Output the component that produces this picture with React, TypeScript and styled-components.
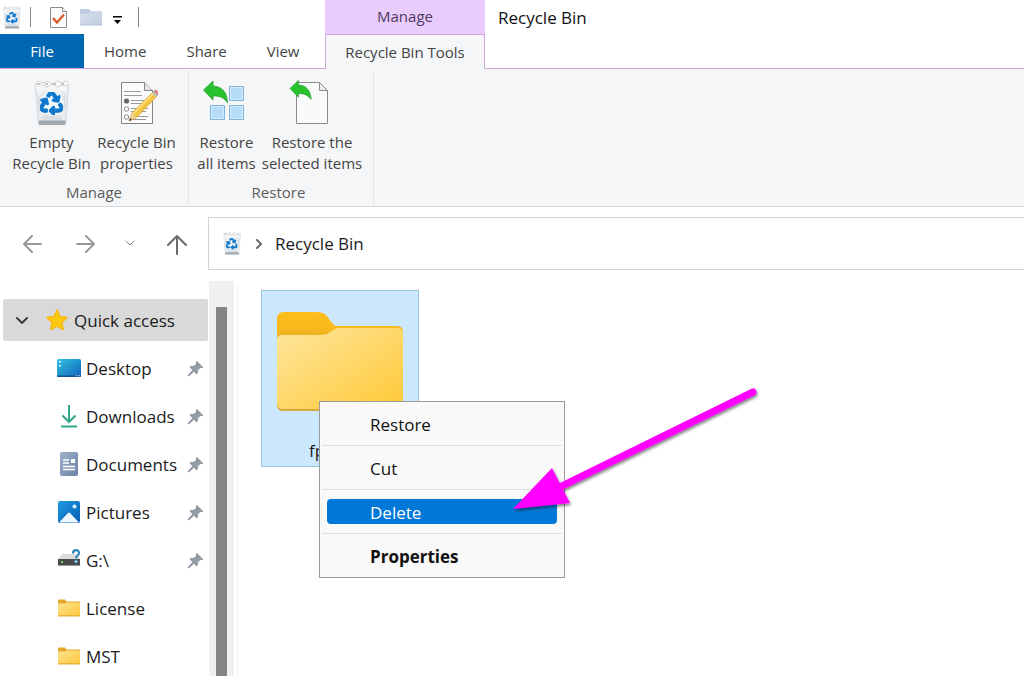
import React from "react";
import styled, { createGlobalStyle, css } from "styled-components";
import { FaRecycle } from "react-icons/fa";

const GlobalStyle = createGlobalStyle`
  *, *::before, *::after { box-sizing: border-box; }
  body {
    margin: 0;
    background: #ffffff;
    color: #1b1b1b;
    font-family: "Open Sans", "Noto Sans", sans-serif;
    font-size: 17px;
    line-height: 24px;
  }
  button {
    margin: 0;
    padding: 0;
    border: 0;
    background: none;
    color: inherit;
    font: inherit;
    cursor: pointer;
  }
  a { color: inherit; text-decoration: none; }
  svg { display: block; flex: none; }
`;

const Window = styled.div`
  display: flex;
  flex-direction: column;
  height: 100vh;
  overflow: hidden;
`;

/* Title bar and ribbon tabs */

const Header = styled.header`
  display: flex;
  flex: none;
  height: 69px;
  font-size: 15px;
`;

const HeaderStart = styled.div`
  display: flex;
  flex-direction: column;
  flex: none;
  width: 325px;
`;

const QuickToolbar = styled.div`
  display: flex;
  align-items: center;
  height: 34px;
  padding-left: 3px;
`;

const ToolButton = styled.button<{ $gap: number }>`
  margin-left: ${(p) => p.$gap}px;
`;

const ToolDivider = styled.span<{ $gap: number }>`
  width: 1px;
  height: 20px;
  margin-left: ${(p) => p.$gap}px;
  background: #8a8a8a;
`;

const TabList = styled.div`
  display: flex;
  flex: 1;
  border-bottom: 1px solid #cda6da;
`;

const Tab = styled.button<{ $primary?: boolean }>`
  padding: 0 20px;
  color: #444;
  ${(p) =>
    p.$primary &&
    css`
      width: 84px;
      background: #0067b3;
      color: #fff;
    `}
`;

const ContextTabs = styled.div`
  display: flex;
  flex-direction: column;
  flex: none;
  width: 160px;
  background: #e9cbfc;
  color: #4c3a5c;
  text-align: center;
`;

const ContextLabel = styled.span`
  height: 34px;
  line-height: 32px;
`;

const ContextTab = styled.button`
  flex: 1;
  border: 1px solid #cda6da;
  border-bottom: 0;
  background: #f5f6f7;
  color: #444;
`;

const WindowTitle = styled.h1`
  flex: 1;
  margin: 0;
  padding-left: 13px;
  border-bottom: 1px solid #cda6da;
  color: #111;
  font-size: 17px;
  font-weight: 400;
  line-height: 35px;
`;

/* Ribbon */

const Ribbon = styled.div`
  display: flex;
  flex: none;
  height: 138px;
  padding-top: 2px;
  border-bottom: 1px solid #d6d9dc;
  background: #f5f6f7;
  color: #444;
  font-size: 15px;
  line-height: 21px;
`;

const RibbonGroup = styled.section<{ $start: number; $end: number }>`
  display: flex;
  flex-direction: column;
  padding: 6px ${(p) => p.$end}px 0 ${(p) => p.$start}px;
  margin-bottom: 2px;
  border-right: 1px solid #e2e4e6;
`;

const RibbonButtons = styled.div`
  display: flex;
`;

const RibbonButton = styled.button<{ $width: number }>`
  display: flex;
  flex-direction: column;
  align-items: center;
  gap: 6px;
  width: ${(p) => p.$width}px;
  padding-top: 3px;
  white-space: pre;
`;

const GroupLabel = styled.span`
  margin-top: 8px;
  color: #5c5c5c;
  text-align: center;
`;

/* Navigation row */

const NavRow = styled.div`
  display: flex;
  flex: none;
  height: 74px;
  padding-top: 10px;
`;

const NavButtons = styled.div`
  display: grid;
  grid-template-columns: 54px 48px 43px 20px;
  align-items: center;
  width: 208px;
  height: 53px;
  padding-left: 22px;
`;

const AddressBar = styled.div`
  display: flex;
  flex: 1;
  align-items: center;
  gap: 12px;
  height: 53px;
  padding-left: 14px;
  border: 1px solid #d4d4d4;
  border-right: 0;
`;

/* Body */

const Body = styled.div`
  display: flex;
  flex: 1;
  min-height: 0;
`;

const Sidebar = styled.nav`
  flex: none;
  width: 209px;
  padding: 15px 1px 0 3px;
  overflow: hidden;
`;

const Label = styled.span`
  padding-top: 2px;
`;

const QuickAccess = styled.a`
  display: flex;
  align-items: center;
  height: 42px;
  margin: 3px 0;
  padding-left: 12px;
  border-radius: 2px;
  background: #d9d9d9;

  svg:nth-child(2) {
    margin: 0 5px 0 15px;
  }
`;

const Place = styled.a`
  display: grid;
  grid-template-columns: 26px 1fr 18px;
  align-items: center;
  column-gap: 4px;
  height: 48px;
  padding: 0 3px 0 53px;
  white-space: nowrap;

  svg:first-child {
    justify-self: center;
  }
`;

const ScrollTrack = styled.div`
  flex: none;
  width: 25px;
  padding: 26px 7px 0;
  background: #f0f0f0;
`;

const ScrollThumb = styled.div`
  width: 11px;
  height: 100%;
  background: #858585;
`;

const Content = styled.main`
  flex: 1;
  margin-left: 3px;
  padding: 9px 23px;
  border-left: 1px solid #f3f3f3;
`;

const FileTile = styled.div`
  position: relative;
  display: flex;
  flex-direction: column;
  align-items: center;
  width: 158px;
  height: 177px;
  padding-top: 20px;
  border: 1px solid #94c4e4;
  background: #cce8ff;
`;

const FileName = styled.span`
  width: 62px;
  margin-top: 28px;
`;

const Menu = styled.div`
  position: absolute;
  top: 110px;
  left: 57px;
  display: flex;
  flex-direction: column;
  width: 246px;
  padding: 0 2px;
  border: 1px solid #9a9a9a;
  background: #f9f9f9;
  color: #111;
`;

const MenuItem = styled.button<{ $selected?: boolean; $strong?: boolean }>`
  height: 25px;
  margin: 9px 5px;
  padding: 2px 0 0 43px;
  border-radius: 4px;
  text-align: left;
  font-weight: ${(p) => (p.$strong ? 700 : 400)};
  ${(p) =>
    p.$selected &&
    css`
      background: #0078d7;
      color: #fff;
    `}
`;

const MenuDivider = styled.hr`
  width: 100%;
  height: 1px;
  margin: 0;
  border: 0;
  background: #dedede;
`;

const Pointer = styled.svg`
  position: absolute;
  top: -18px;
  left: 186px;
  pointer-events: none;
`;

/* Icons */

function BinIcon({ width, height }: { width: number; height: number }) {
  return (
    <svg width={width} height={height} viewBox="0 0 36 46" preserveAspectRatio="none" aria-hidden="true">
      <path d="M1 4h34l-3 41H4z" fill="#e9edf0" />
      <path d="M1 4h34l-1 9-6-3-8 4-8-4-6 4-4-2z" fill="#f3f5f6" />
      <path d="M4 16l6 6-4 10-2-2zM32 13l-5 7 3 10 1-1zM8 36l10-3 10 3v5H8z" fill="#dbe0e5" />
      <path d="M1 4l3-3 5 2 5-2 4 3 5-3 5 2 4-2 3 3v2l-6-1-5 2-6-3-5 3-6-3z" fill="#fafafa" stroke="#cfd2d4" strokeWidth="1" />
      <path d="M3 4h31" stroke="#b5b9bc" strokeWidth="1.300" strokeDasharray="3 5" />
      <path d="M4 40.500h28.300l-.3 4.500H4.300z" fill="#9fa8af" />
      <path d="M1.500 5l3 40M34.500 5l-3 40" stroke="#d3d8dc" />
      <circle cx="18" cy="24" r="12" fill="#f4f9fd" opacity=".8" />
      <FaRecycle x={6} y={12} size={23} color="#1078cc" stroke="#1078cc" strokeWidth={30} />
    </svg>
  );
}

function CheckPageIcon() {
  return (
    <svg width="19" height="23" viewBox="0 0 19 23" aria-hidden="true">
      <path d="M1.500 1.500h12l4 4v16h-16z" fill="#fbfbfb" stroke="#8c8c8c" />
      <path d="M13.500 1.500v4h4" fill="#fff" stroke="#8c8c8c" />
      <path d="M4 12l4 4.500 7-8" fill="none" stroke="#dd5a2c" strokeWidth="2.300" />
    </svg>
  );
}

function NewFolderIcon() {
  return (
    <svg width="23" height="18" viewBox="0 0 23 18" aria-hidden="true">
      <defs>
        <linearGradient id="pale" x1="0" y1="0" x2="1" y2="1">
          <stop offset="0" stopColor="#d6dfed" />
          <stop offset="1" stopColor="#c3cee2" />
        </linearGradient>
      </defs>
      <path d="M0 1h9l2 2h11v14H0z" fill="#c0cce0" />
      <path d="M0 6h8l3-3h11v13H0z" fill="url(#pale)" />
      <path d="M0 17h22" stroke="#b4c1d6" />
    </svg>
  );
}

function CustomizeIcon() {
  return (
    <svg width="9" height="15" viewBox="0 0 9 15" aria-hidden="true">
      <path d="M0 6h9v1.500H0zM1 10h7l-3.500 4z" fill="#000" />
    </svg>
  );
}

function PropertiesIcon() {
  return (
    <svg width="42" height="46" viewBox="0 0 42 46" aria-hidden="true">
      <path d="M5.500 2.500h23l8 8v33h-31z" fill="#fbfbfb" stroke="#858585" />
      <path d="M28.500 2.500v8h8" fill="#e8e8e8" stroke="#858585" />
      <path d="M8 11.500h17M8 15.500h18M15 20.500h17M15 23.500h15M15 28.500h17M15 31.500h15M15 36.500h17M15 39.500h15" stroke="#9a9a9a" />
      <circle cx="10.500" cy="21" r="2.600" fill="#666" />
      <circle cx="10.500" cy="29" r="2.200" fill="#fff" stroke="#888" />
      <circle cx="10.500" cy="37" r="2.200" fill="#fff" stroke="#888" />
      <path d="M13 41l3-8L38 11l4 4-22 23z" fill="#f4c542" stroke="#d79f25" strokeWidth=".7" />
      <path d="M17 34L38 13" stroke="#ffe48a" strokeWidth="1.500" />
      <path d="M13 41l3-8 4 4.500z" fill="#ecd0a0" />
      <path d="M13 41l1-3 2 2z" fill="#333" />
      <path d="M36 13l2-2 4 4-2 2z" fill="#b8bdc2" />
      <path d="M38 11l1.500-1.500q2 0 2.500 3v2.500z" fill="#e2798a" />
    </svg>
  );
}

function RestoreArrow() {
  return (
    <path
      d="M0 9L9.500 0v5c8 .5 14 5 14.500 16.500-4-5-8-7-14.500-6.500v4z"
      fill="#27c22c"
      stroke="#2a9a35"
      strokeWidth=".8"
      strokeLinejoin="round"
    />
  );
}

function RestoreAllIcon() {
  return (
    <svg width="48" height="46" viewBox="0 0 48 46" aria-hidden="true">
      <g fill="#b5dcf9" stroke="#7fb2dc">
        <path d="M26.500 6.500h14v14h-14zM7.500 25.500h14v14h-14zM26.500 25.500h14v14h-14z" />
      </g>
      <path d="M27.500 7.500h12v12h-12zM8.500 26.500h12v12h-12zM27.500 26.500h12v12h-12z" fill="none" stroke="#d5ebfb" />
      <g transform="translate(.5 1)">
        <RestoreArrow />
      </g>
    </svg>
  );
}

function RestoreSelectedIcon() {
  return (
    <svg width="46" height="46" viewBox="0 0 46 46" aria-hidden="true">
      <path d="M7.500 2.500h23l8 8v33h-31z" fill="#f9fafb" stroke="#8a8a8a" />
      <path d="M30.500 2.500v8h8z" fill="#ededed" stroke="#8a8a8a" />
      <g transform="translate(1 .5) scale(.88)">
        <RestoreArrow />
      </g>
    </svg>
  );
}

function Stroke({ w, h, d, color, width = 2 }: { w: number; h: number; d: string; color: string; width?: number }) {
  return (
    <svg width={w} height={h} viewBox={`0 0 ${w} ${h}`} fill="none" stroke={color} strokeWidth={width} strokeLinecap="round" strokeLinejoin="round" aria-hidden="true">
      <path d={d} />
    </svg>
  );
}

function StarIcon() {
  return (
    <svg width="24" height="24" viewBox="0 0 24 24" aria-hidden="true">
      <path d="M12 2l3 6.500 7.200.9-5.300 5 1.400 7.200L12 18.100l-6.300 3.500 1.400-7.200-5.300-5 7.200-.9z" fill="#fdc90f" stroke="#f9b917" strokeWidth="1.500" strokeLinejoin="round" />
    </svg>
  );
}

function DesktopIcon() {
  return (
    <svg width="24" height="18" viewBox="0 0 24 18" aria-hidden="true">
      <defs>
        <linearGradient id="desk" x1="0" y1="0" x2="1" y2="1">
          <stop offset="0" stopColor="#31c4df" />
          <stop offset="1" stopColor="#0f62ba" />
        </linearGradient>
      </defs>
      <rect width="24" height="18" rx="1.500" fill="url(#desk)" />
      <path d="M0 16.500h24q0 1.500-1.500 1.500h-21Q0 18 0 16.500z" fill="#10518c" />
      <path d="M2 2h2v1.500H2zM2 6h2v1.500H2zM19 16.200h1.200v1H19zM21.500 16.200h1.200v1h-1.200z" fill="#e0f8ff" />
    </svg>
  );
}

function DownloadIcon() {
  return (
    <svg width="18" height="24" viewBox="0 0 18 24" fill="none" stroke="#2fa78a" strokeWidth="2" aria-hidden="true">
      <path d="M9 1v17M2.500 11.500L9 18l6.500-6.500M1 22.500h16" />
    </svg>
  );
}

function DocumentIcon() {
  return (
    <svg width="18" height="24" viewBox="0 0 18 24" aria-hidden="true">
      <defs>
        <linearGradient id="doc" x1="0" y1="0" x2="1" y2="1">
          <stop offset="0" stopColor="#9fb2cb" />
          <stop offset="1" stopColor="#6c83a6" />
        </linearGradient>
      </defs>
      <rect width="18" height="24" rx="2" fill="url(#doc)" />
      <path d="M3 8h6M3 11h6M3 14.500h12M3 17.500h12" stroke="#fff" strokeWidth="1.300" />
      <path d="M11 7h4v4h-4z" fill="#fff" />
    </svg>
  );
}

function PictureIcon() {
  return (
    <svg width="22" height="22" viewBox="0 0 22 22" aria-hidden="true">
      <defs>
        <linearGradient id="pic" x1="0" y1="0" x2="1" y2="1">
          <stop offset="0" stopColor="#1c9be0" />
          <stop offset="1" stopColor="#0a5cb4" />
        </linearGradient>
      </defs>
      <rect width="22" height="22" rx="2" fill="url(#pic)" />
      <path d="M1.500 21l8.500-9q1-1 2 0l8.500 9q-.5.600-1.500.600H3Q2 21.600 1.500 21z" fill="#f1f8fd" />
      <circle cx="16.500" cy="5.500" r="2" fill="#d9f2ff" />
    </svg>
  );
}

function DriveIcon() {
  return (
    <svg width="22" height="22" viewBox="0 0 22 22" aria-hidden="true">
      <path d="M4 5h14l4 5H0z" fill="#dcdcdc" />
      <path d="M0 10h22v6H0z" fill="#4a4a4a" />
      <path d="M0 16.500h22" stroke="#999" />
      <path d="M3 12h2v2H3z" fill="#58d957" />
      <path d="M15 4.500c0-4.500 6-4.500 6-.5 0 2.500-3 3-3 5.500" fill="none" stroke="#2a86bd" strokeWidth="2.200" />
      <circle cx="18" cy="12.500" r="1.500" fill="#dff2fc" stroke="#2a86bd" />
    </svg>
  );
}

function FolderIcon() {
  return (
    <svg width="22" height="18" viewBox="0 0 22 18" aria-hidden="true">
      <defs>
        <linearGradient id="small" x1="0" y1="0" x2="1" y2="1">
          <stop offset="0" stopColor="#ffe391" />
          <stop offset="1" stopColor="#fcc73d" />
        </linearGradient>
      </defs>
      <path d="M0 1.500Q0 .5 1 .5h6l1.500 2H22V17H0z" fill="#e0a92c" />
      <path d="M0 4.500h7l1.500-1H22v13H0z" fill="url(#small)" />
      <path d="M0 17h22" stroke="#e0b040" />
    </svg>
  );
}

function PinIcon() {
  return (
    <svg width="17" height="17" viewBox="0 0 17 17" aria-hidden="true">
      <path d="M10 1l6 6q.5 1-1 1l-2 .300-2 2c0 2 .3 3-1.300 4.200L7 11.800 2 16.200H.8V15l4.500-5L2.500 7C4 5.500 5.500 5.800 7 6l2-2V2q0-1.500 1-1z" fill="#929ca6" />
    </svg>
  );
}

function LargeFolderIcon() {
  return (
    <svg width="128" height="100" viewBox="0 0 128 100" aria-hidden="true">
      <defs>
        <linearGradient id="front" x1="0" y1="0" x2="1" y2="1">
          <stop offset="0" stopColor="#ffe69d" />
          <stop offset="1" stopColor="#ffc937" />
        </linearGradient>
        <linearGradient id="back" x1="0" y1="0" x2="0" y2="1">
          <stop offset="0" stopColor="#fdbf1c" />
          <stop offset=".5" stopColor="#f9b91c" />
          <stop offset="1" stopColor="#dfa52a" />
        </linearGradient>
      </defs>
      <path d="M1 8q0-7 7-7h32q8 0 11 4l6 8q1 2 4 2h60q6 0 6 6v12H1z" fill="url(#back)" />
      <path d="M1 30h126v64q0 6-6 6H7q-6 0-6-6z" fill="#d9a93f" />
      <path d="M1 29q0-5 5-5h39q6 0 9-3l3-2q3-2 6-2h58q6 0 6 6v69q0 6-6 6H7q-6 0-6-6z" fill="url(#front)" />
    </svg>
  );
}

const places = [
  { name: "Desktop", icon: <DesktopIcon />, pinned: true },
  { name: "Downloads", icon: <DownloadIcon />, pinned: true },
  { name: "Documents", icon: <DocumentIcon />, pinned: true },
  { name: "Pictures", icon: <PictureIcon />, pinned: true },
  { name: "G:\\", icon: <DriveIcon />, pinned: true },
  { name: "License", icon: <FolderIcon />, pinned: false },
  { name: "MST", icon: <FolderIcon />, pinned: false },
];

export default function App() {
  return (
    <Window>
      <GlobalStyle />
      <Header>
        <HeaderStart>
          <QuickToolbar>
            <BinIcon width={18} height={23} />
            <ToolDivider $gap={9} />
            <ToolButton $gap={18} aria-label="Properties">
              <CheckPageIcon />
            </ToolButton>
            <ToolButton $gap={12} aria-label="New folder">
              <NewFolderIcon />
            </ToolButton>
            <ToolButton $gap={10} aria-label="Customize toolbar">
              <CustomizeIcon />
            </ToolButton>
            <ToolDivider $gap={16} />
          </QuickToolbar>
          <TabList>
            <Tab $primary>File</Tab>
            <Tab>Home</Tab>
            <Tab>Share</Tab>
            <Tab>View</Tab>
          </TabList>
        </HeaderStart>
        <ContextTabs>
          <ContextLabel>Manage</ContextLabel>
          <ContextTab>Recycle Bin Tools</ContextTab>
        </ContextTabs>
        <WindowTitle>Recycle Bin</WindowTitle>
      </Header>

      <Ribbon>
        <RibbonGroup $start={9} $end={9}>
          <RibbonButtons>
            <RibbonButton $width={85}>
              <BinIcon width={36} height={46} />
              {"Empty\nRecycle Bin"}
            </RibbonButton>
            <RibbonButton $width={85}>
              <PropertiesIcon />
              {"Recycle Bin\nproperties"}
            </RibbonButton>
          </RibbonButtons>
          <GroupLabel>Manage</GroupLabel>
        </RibbonGroup>
        <RibbonGroup $start={4} $end={9}>
          <RibbonButtons>
            <RibbonButton $width={67}>
              <RestoreAllIcon />
              {"Restore\nall items"}
            </RibbonButton>
            <RibbonButton $width={104}>
              <RestoreSelectedIcon />
              {"Restore the\nselected items"}
            </RibbonButton>
          </RibbonButtons>
          <GroupLabel>Restore</GroupLabel>
        </RibbonGroup>
      </Ribbon>

      <NavRow>
        <NavButtons>
          <button aria-label="Back">
            <Stroke w={20} h={20} d="M19 10H2M10 2L2 10l8 8" color="#999" />
          </button>
          <button aria-label="Forward">
            <Stroke w={20} h={20} d="M1 10h17M10 2l8 8-8 8" color="#999" />
          </button>
          <button aria-label="Recent locations">
            <Stroke w={12} h={10} d="M2 2l4 4 4-4" color="#808080" width={1} />
          </button>
          <button aria-label="Up">
            <Stroke w={20} h={22} d="M10 21V3M1 12l9-9 9 9" color="#6a6a6a" />
          </button>
        </NavButtons>
        <AddressBar>
          <BinIcon width={18} height={23} />
          <Stroke w={10} h={10} d="M4 1l4 4-4 4" color="#6a6a6a" />
          <a href="#">Recycle Bin</a>
        </AddressBar>
      </NavRow>

      <Body>
        <Sidebar>
          <QuickAccess href="#">
            <Stroke w={15} h={10} d="M2 3l5 5 5-5" color="#3c3c3c" />
            <StarIcon />
            <Label>Quick access</Label>
          </QuickAccess>
          {places.map((p) => (
            <Place href="#" key={p.name}>
              {p.icon}
              <Label>{p.name}</Label>
              {p.pinned && <PinIcon />}
            </Place>
          ))}
        </Sidebar>
        <ScrollTrack>
          <ScrollThumb />
        </ScrollTrack>
        <Content>
          <FileTile>
            <LargeFolderIcon />
            <FileName>fp</FileName>
            <Menu role="menu">
              <MenuItem role="menuitem">Restore</MenuItem>
              <MenuDivider />
              <MenuItem role="menuitem">Cut</MenuItem>
              <MenuDivider />
              <MenuItem role="menuitem" $selected>
                Delete
              </MenuItem>
              <MenuDivider />
              <MenuItem role="menuitem" $strong>
                Properties
              </MenuItem>
              <Pointer width="260" height="140" viewBox="0 0 260 140" aria-hidden="true">
                <defs>
                  <filter id="shade" x="-10%" y="-10%" width="120%" height="130%">
                    <feDropShadow dx="1" dy="2" stdDeviation="1.500" floodColor="#000" floodOpacity=".5" />
                  </filter>
                </defs>
                <g filter="url(#shade)">
                  <path d="M54 103L247 8" stroke="#ff00ff" strokeWidth="7" strokeLinecap="round" />
                  <path d="M7 125L46 84l18 35z" fill="#ff00ff" />
                </g>
              </Pointer>
            </Menu>
          </FileTile>
        </Content>
      </Body>
    </Window>
  );
}
